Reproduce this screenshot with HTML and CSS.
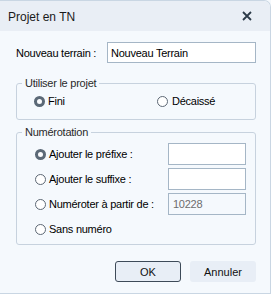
FILE: index.html
```html
<!DOCTYPE html>
<html lang="fr">
<head>
  <meta charset="UTF-8">
  <title>Projet en TN</title>
  <link rel="stylesheet" href="styles.css">
</head>
<body>

  <div class="window">
    <div class="titlebar">
      <span class="title">Projet en TN</span>
      <span class="close" aria-label="Fermer">
        <svg width="10" height="10" viewBox="0 0 10 10">
          <path d="M1 1 L9 9 M9 1 L1 9" stroke="#2c3a48" stroke-width="1.8" fill="none"/>
        </svg>
      </span>
    </div>

    <div class="content">
      <div class="row-name">
        <label>Nouveau terrain :</label>
        <input class="field wide" type="text" value="Nouveau Terrain">
      </div>

      <fieldset class="group">
        <legend>Utiliser le projet</legend>
        <div class="projet">
          <span class="radio checked"></span><span>Fini</span>
          <span class="radio"></span><span>Décaissé</span>
        </div>
      </fieldset>

      <fieldset class="group second">
        <legend>Numérotation</legend>
        <div class="num">
          <div class="num-row">
            <span class="opt"><span class="radio checked"></span>Ajouter le préfixe :</span>
            <input class="field" type="text">
          </div>
          <div class="num-row">
            <span class="opt"><span class="radio"></span>Ajouter le suffixe :</span>
            <input class="field" type="text">
          </div>
          <div class="num-row">
            <span class="opt"><span class="radio"></span>Numéroter à partir de :</span>
            <input class="field off" type="text" value="10228">
          </div>
          <div class="num-row">
            <span class="opt"><span class="radio"></span>Sans numéro</span>
          </div>
        </div>
      </fieldset>

      <div class="buttons">
        <button class="btn default">OK</button>
        <button class="btn">Annuler</button>
      </div>
    </div>
  </div>

</body>
</html>
```

FILE: styles.css
```css
body {
  margin: 0;
  background: #f5f9fd;
  font-family: "Liberation Sans", Arial, sans-serif;
  font-size: 11px;
  letter-spacing: -0.25px;
  color: #000;
}

.window {
  width: 271px;
  height: 294px;
  box-sizing: border-box;
  border: 1px solid #c9d6e3;
  border-left: none;
  border-radius: 0 7px 0 0;
  background: #f5f9fd;
  overflow: hidden;
}

.titlebar {
  height: 30px;
  background: #e9eef5;
  display: flex;
  align-items: center;
  justify-content: space-between;
  padding: 0 18px 0 8px;
}

.title {
  font-size: 12px;
  letter-spacing: 0;
  color: #1a1a1a;
  padding-top: 1px;
}

.close {
  display: flex;
  margin-top: -1px;
}

.content {
  padding: 11px 14px 0 16px;
}

.row-name {
  display: flex;
  align-items: center;
  height: 21px;
}

.row-name label {
  width: 91px;
}

.field {
  box-sizing: border-box;
  height: 22px;
  width: 78px;
  border: 1px solid #a5b6c6;
  background: #fff;
  font-family: inherit;
  font-size: 11px;
  letter-spacing: -0.25px;
  padding: 0 4px;
  margin: 0;
  outline: none;
}

.field.wide {
  width: 149px;
  height: 21px;
  padding: 0 3px;
}

.field.off {
  background: #f5f9fd;
  color: #6d6d6d;
}

.group {
  margin: 14px 0 0;
  padding: 0;
  width: 240px;
  box-sizing: border-box;
  border: 1px solid #c7d2de;
  border-radius: 3px;
}

.group.second {
  margin-top: 6px;
}

.group legend {
  margin-left: 5px;
  padding: 0 3px;
  color: #2a2a2a;
  line-height: 13px;
}

.projet {
  display: grid;
  grid-template-columns: 14px 109px 15px auto;
  align-items: center;
  padding: 5px 0 12px 17px;
}

.radio {
  display: inline-block;
  width: 11px;
  height: 11px;
  box-sizing: border-box;
  border: 1px solid #5d6875;
  border-radius: 50%;
  background: #fff;
}

.radio.checked {
  border: 3px solid #5b6977;
  background: #fbfcfe;
}

.num {
  padding: 4px 9px 4px 18px;
}

.num-row {
  display: flex;
  align-items: center;
  justify-content: space-between;
  height: 22px;
  margin-bottom: 3px;
}

.num-row:last-child {
  margin-bottom: 0;
}

.opt {
  display: flex;
  align-items: center;
  gap: 3px;
}

.buttons {
  display: flex;
  justify-content: flex-end;
  gap: 9px;
  margin-top: 16px;
}

.btn {
  width: 66px;
  height: 21px;
  box-sizing: border-box;
  border: 1px solid transparent;
  border-radius: 3px;
  background: #e8eef6;
  font-family: inherit;
  font-size: 11px;
  color: #111;
  padding: 0;
}

.btn.default {
  border-color: #3e4b59;
}
```
